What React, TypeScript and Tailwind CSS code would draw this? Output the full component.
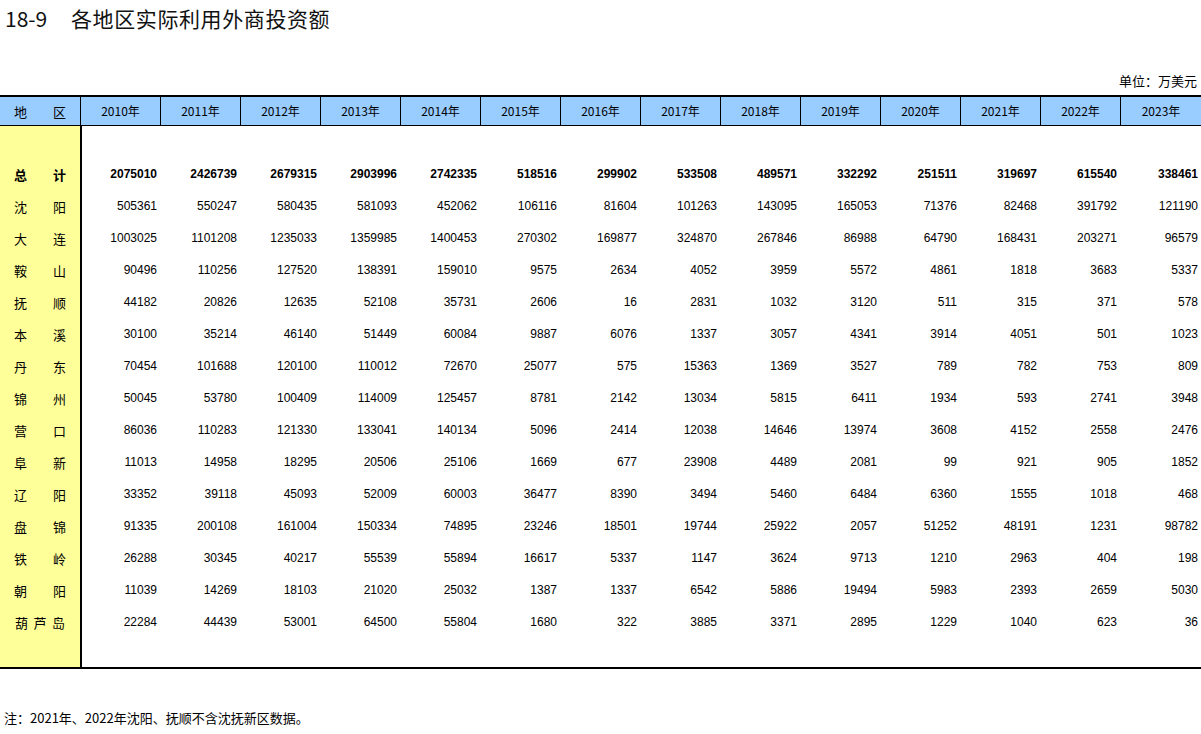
import React from "react";

const years = [2010, 2011, 2012, 2013, 2014, 2015, 2016, 2017, 2018, 2019, 2020, 2021, 2022, 2023];

const rows: { name: string[]; vals: number[]; bold?: boolean }[] = [
  { name: ["总", "计"], bold: true, vals: [2075010, 2426739, 2679315, 2903996, 2742335, 518516, 299902, 533508, 489571, 332292, 251511, 319697, 615540, 338461] },
  { name: ["沈", "阳"], vals: [505361, 550247, 580435, 581093, 452062, 106116, 81604, 101263, 143095, 165053, 71376, 82468, 391792, 121190] },
  { name: ["大", "连"], vals: [1003025, 1101208, 1235033, 1359985, 1400453, 270302, 169877, 324870, 267846, 86988, 64790, 168431, 203271, 96579] },
  { name: ["鞍", "山"], vals: [90496, 110256, 127520, 138391, 159010, 9575, 2634, 4052, 3959, 5572, 4861, 1818, 3683, 5337] },
  { name: ["抚", "顺"], vals: [44182, 20826, 12635, 52108, 35731, 2606, 16, 2831, 1032, 3120, 511, 315, 371, 578] },
  { name: ["本", "溪"], vals: [30100, 35214, 46140, 51449, 60084, 9887, 6076, 1337, 3057, 4341, 3914, 4051, 501, 1023] },
  { name: ["丹", "东"], vals: [70454, 101688, 120100, 110012, 72670, 25077, 575, 15363, 1369, 3527, 789, 782, 753, 809] },
  { name: ["锦", "州"], vals: [50045, 53780, 100409, 114009, 125457, 8781, 2142, 13034, 5815, 6411, 1934, 593, 2741, 3948] },
  { name: ["营", "口"], vals: [86036, 110283, 121330, 133041, 140134, 5096, 2414, 12038, 14646, 13974, 3608, 4152, 2558, 2476] },
  { name: ["阜", "新"], vals: [11013, 14958, 18295, 20506, 25106, 1669, 677, 23908, 4489, 2081, 99, 921, 905, 1852] },
  { name: ["辽", "阳"], vals: [33352, 39118, 45093, 52009, 60003, 36477, 8390, 3494, 5460, 6484, 6360, 1555, 1018, 468] },
  { name: ["盘", "锦"], vals: [91335, 200108, 161004, 150334, 74895, 23246, 18501, 19744, 25922, 2057, 51252, 48191, 1231, 98782] },
  { name: ["铁", "岭"], vals: [26288, 30345, 40217, 55539, 55894, 16617, 5337, 1147, 3624, 9713, 1210, 2963, 404, 198] },
  { name: ["朝", "阳"], vals: [11039, 14269, 18103, 21020, 25032, 1387, 1337, 6542, 5886, 19494, 5983, 2393, 2659, 5030] },
  { name: ["葫", "芦", "岛"], vals: [22284, 44439, 53001, 64500, 55804, 1680, 322, 3885, 3371, 2895, 1229, 1040, 623, 36] },
];

const cjk = "font-['Noto_Sans_CJK_SC',sans-serif]";

export default function App() {
  return (
    <div className={`w-[1201px] bg-white text-black ${cjk}`}>
      {/* Title */}
      <div className="h-[36px] flex items-center pl-[5px] text-[21px] leading-none text-[#111]">
        <span className="w-[66px]">18-9</span>
        <span className="tracking-[0.6px]">各地区实际利用外商投资额</span>
      </div>
      {/* Unit */}
      <div className="mt-[36px] mb-[7px] h-[16px] flex items-center justify-end pr-[4px] text-[13px] leading-none">
        单位：万美元
      </div>

      {/* Header */}
      <div className="flex h-[31px] border-t-2 border-b border-black bg-[#99ccff] text-[12px] leading-none">
        <div className="w-[80px] shrink-0 flex items-center justify-between px-[14px] text-[13px]">
          <span>地</span>
          <span>区</span>
        </div>
        <div className="flex-1 grid grid-cols-[repeat(13,80px)_1fr]">
          {years.map((y) => (
            <div key={y} className="border-l border-black flex items-center justify-center">
              {y}年
            </div>
          ))}
        </div>
      </div>

      {/* Body */}
      <div className="flex border-b-2 border-black">
        <div className="w-[80px] shrink-0 bg-[#ffff99] pt-[32px] pb-[29px] flex flex-col text-[13px] leading-none">
          {rows.map((r, i) => (
            <div
              key={i}
              className={`h-[32px] flex items-center justify-between ${r.name.length === 3 ? "px-[15px]" : "px-[14px]"} ${r.bold ? "font-bold" : ""}`}
            >
              {r.name.map((c, j) => (
                <span key={j}>{c}</span>
              ))}
            </div>
          ))}
        </div>
        <div className="flex-1 border-l-2 border-black pt-[32px] pb-[29px] flex flex-col font-['Liberation_Sans',Arial,sans-serif] text-[12px] leading-none">
          {rows.map((r, i) => (
            <div key={i} className={`h-[32px] grid grid-cols-[78px_repeat(12,80px)_1fr] ${r.bold ? "font-bold" : ""}`}>
              {r.vals.map((v, j) => (
                <div key={j} className="flex items-center justify-end pr-[3px]">
                  {v}
                </div>
              ))}
            </div>
          ))}
        </div>
      </div>

      {/* Note */}
      <div className="mt-[40px] h-[16px] flex items-center pl-[4px] text-[13px] leading-none">
        注：2021年、2022年沈阳、抚顺不含沈抚新区数据。
      </div>
      <div className="h-[9px]" />
    </div>
  );
}
